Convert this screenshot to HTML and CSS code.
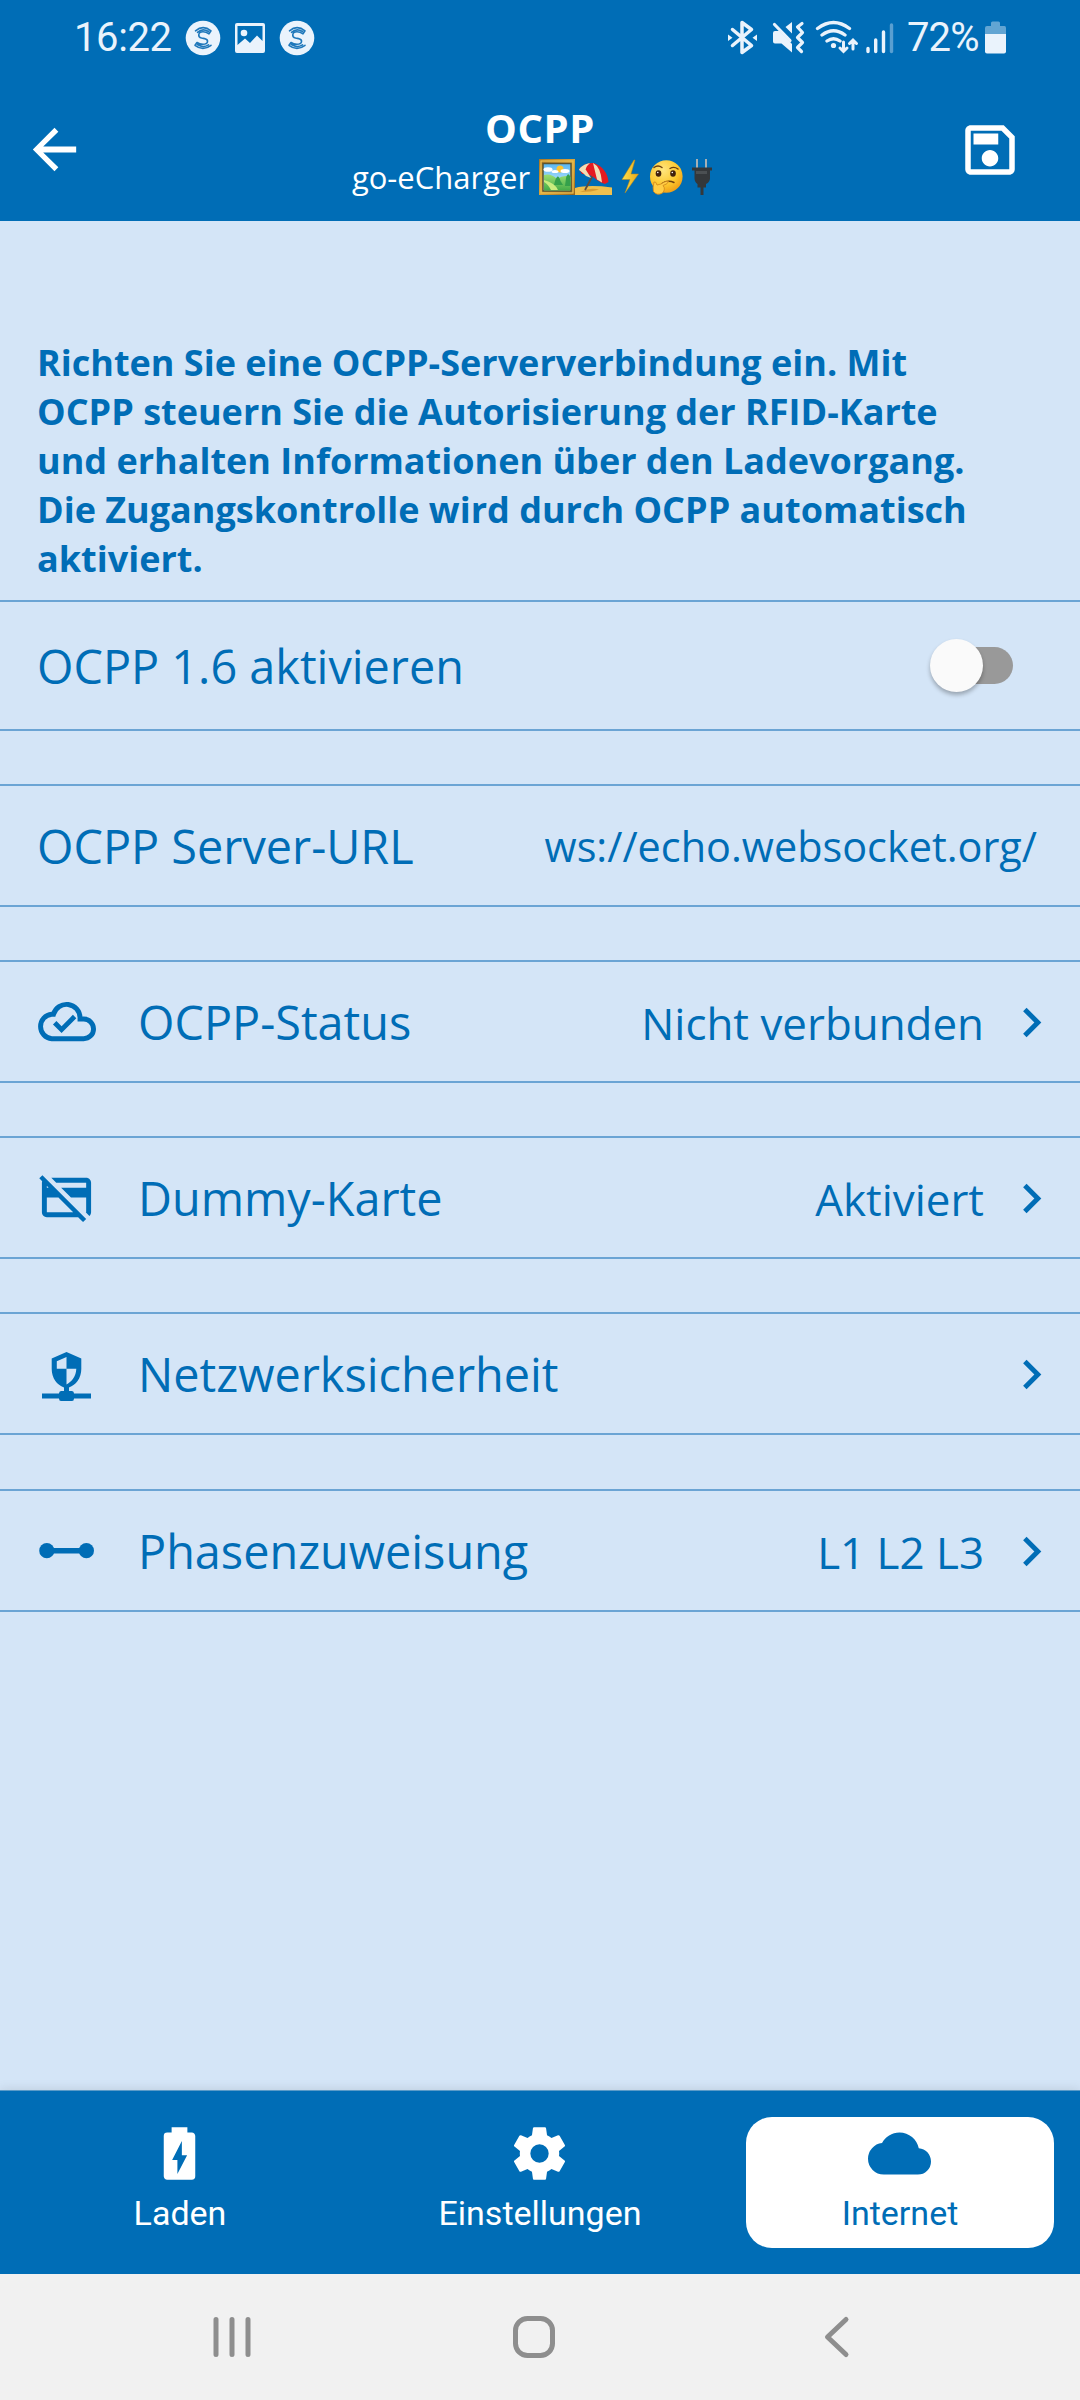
FILE: index.html
```html
<!DOCTYPE html>
<html lang="de">
<head>
<meta charset="utf-8">
<title>OCPP</title>
<link rel="stylesheet" href="styles.css">
</head>
<body>
<div class="screen">
  <header class="top">
    <div class="status">
      <div class="status-left">
        <span class="clock">16:22</span>
        <svg class="s-badge" width="36" height="36" viewBox="0 0 36 36"><circle cx="18" cy="18" r="17.3" fill="#eaf3fc"/><path fill="none" stroke="#1f78bb" stroke-width="1.600" stroke-linecap="round" stroke-linejoin="round" d="M10.500 10.800Q18 4.500 26 10.800L24 13.800Q21 11.800 18 11.800C12.800 11.800 12.500 17 16.500 18L19.500 18.600C24 19.800 23.500 24.300 18 24.300Q14.500 24.300 12 22.500L10 25.300Q18 31.500 26 25.300M12.500 12.300Q17.500 8 23.500 11.500M12.500 24.500Q18 28.300 23.500 24.800"/></svg>
        <svg class="s-image" width="32" height="32" viewBox="0 0 32 32"><path fill="#eaf3fc" fill-rule="evenodd" d="M3 1H29A2 2 0 0 1 31 3V29A2 2 0 0 1 29 31H3A2 2 0 0 1 1 29V3A2 2 0 0 1 3 1ZM3.500 4V23L11 16.500L16 21L23 13.500L28.500 19V4Z"/><circle cx="10" cy="11" r="3.300" fill="#eaf3fc"/></svg>
        <svg class="s-badge" width="36" height="36" viewBox="0 0 36 36"><circle cx="18" cy="18" r="17.3" fill="#eaf3fc"/><path fill="none" stroke="#1f78bb" stroke-width="1.600" stroke-linecap="round" stroke-linejoin="round" d="M10.500 10.800Q18 4.500 26 10.800L24 13.800Q21 11.800 18 11.800C12.800 11.800 12.500 17 16.500 18L19.500 18.600C24 19.800 23.500 24.300 18 24.300Q14.500 24.300 12 22.500L10 25.300Q18 31.500 26 25.300M12.500 12.300Q17.500 8 23.500 11.500M12.500 24.500Q18 28.300 23.500 24.800"/></svg>
      </div>
      <div class="status-right">
        <svg width="172" height="36" viewBox="728 19 172 36">
          <g fill="none" stroke="#eaf3fc" stroke-width="3.500" stroke-linecap="round" stroke-linejoin="round">
            <path d="M732.500 28.500L751.500 44.500L742 51.500V21.500L751.500 28.500L732.500 44.500"/>
          </g>
          <path fill="#eaf3fc" d="M728 33.500L732.500 36.700L728 40ZM757 33.500L752.500 36.700L757 40Z"/>
          <path fill="#eaf3fc" d="M775 30H779.500L792 43V51.500L781.500 42.500H775Q773 42.500 773 40.500V32Q773 30 775 30ZM792 21V32.500L785.500 26Z"/>
          <path fill="none" stroke="#eaf3fc" stroke-width="3.200" stroke-linecap="round" stroke-linejoin="round" d="M774.500 23.500L790 39.500M802 22.500L797.500 26L802.500 31.500L797.500 36.500L802.500 41.500L797.500 46.500L801.500 50.500"/>
          <g fill="none" stroke="#eaf3fc" stroke-width="3.300" stroke-linecap="round"><path d="M817.500 27.500Q833.500 15.500 849.500 27.500M822 34Q833.500 25.500 845 34M827 40Q833.500 35.500 840 40"/><path stroke-width="3" d="M843.500 41V50M840 47L843.500 50.500L847 47M853 48V39.500M849.500 42.500L853 39L856.500 42.500"/></g>
          <circle cx="833.500" cy="44.500" r="2.600" fill="#eaf3fc"/>
          <g stroke="#eaf3fc" stroke-width="3.400" stroke-linecap="round"><path d="M868 47.500V50.500M875.700 39V50.500M883.500 31V50.500"/><path stroke-opacity=".38" d="M891.500 24V50.500"/></g>
        </svg>
        <span class="percent">72%</span>
        <svg width="24" height="36" viewBox="984 19 24 36">
          <path fill="#eaf3fc" fill-opacity=".42" d="M991 25V22Q991 20.500 992.500 20.500H998.500Q1000 20.500 1000 22V25H1004.500Q1006 25 1006 27V33H985V27Q985 25 987 25Z"/>
          <path fill="#eaf3fc" d="M985 33H1006V50.500Q1006 52.500 1004 52.500H987Q985 52.500 985 50.500Z"/>
        </svg>
      </div>
    </div>
    <div class="appbar">
      <svg class="back" width="65" height="65" viewBox="0 0 24 24"><path fill="#fff" d="M20 10.900H7.830l5.590-5.490L12 4l-8 8 8 8 1.410-1.410L7.830 13.100H20z"/></svg>
      <div class="titles">
        <h1>OCPP</h1>
        <div class="subtitle"><span class="device">go-eCharger</span>
          <svg class="emoji" width="190" height="38" viewBox="538 160 190 38" role="img" aria-label="Bild, Sonnenschirm, Blitz, Nachdenken, Stecker">
            <defs>
              <linearGradient id="frame" x2="1" y2="1"><stop offset="0" stop-color="#a87624"/><stop offset=".5" stop-color="#d9a53c"/><stop offset="1" stop-color="#94651b"/></linearGradient>
              <linearGradient id="sky" x2="0" y2="1"><stop offset="0" stop-color="#57b6f2"/><stop offset="1" stop-color="#d9f2ff"/></linearGradient>
              <linearGradient id="grass" x2="0" y2="1"><stop offset="0" stop-color="#9ade72"/><stop offset="1" stop-color="#44ab48"/></linearGradient>
              <linearGradient id="bolt"><stop offset="0" stop-color="#ffe14a"/><stop offset="1" stop-color="#e8a91c"/></linearGradient>
              <radialGradient id="face" cx=".4" cy=".3" r=".75"><stop offset="0" stop-color="#ffe680"/><stop offset=".6" stop-color="#fdc92f"/><stop offset="1" stop-color="#ee9a14"/></radialGradient>
            </defs>
            <rect x="539" y="161" width="36" height="36" fill="url(#frame)"/><rect x="541" y="163" width="32" height="32" fill="none" stroke="#edc052" stroke-width="1.200"/>
            <rect x="543" y="165.500" width="28" height="27.500" fill="url(#sky)" stroke="#5b5430" stroke-width="1.500"/>
            <circle cx="560" cy="171" r="3.500" fill="#ffc52e"/><g fill="#fff"><ellipse cx="548" cy="171.500" rx="4.500" ry="2.300"/><ellipse cx="565" cy="173" rx="4.500" ry="2"/><ellipse cx="555" cy="173.500" rx="3.500" ry="1.600"/></g>
            <path fill="url(#grass)" d="M544 177Q551 175 557 181Q564 176 570.500 179V192.500H544Z"/><path fill="#34a04b" d="M555 183Q558 174 560.500 183L563 187H554ZM566 180Q568 173 570.500 179V188H565Z"/><path fill="#c9ec7f" d="M544 182Q555 185 558 192H551Q548 186 544 184Z"/>
            <path fill="#efc04e" d="M575 190Q588 186.500 612 189.500V197H575Z"/><path fill="#d79b31" d="M580 194Q590 189 599 191.500Q592 194 580 194Z"/>
            <path d="M593 177L585 192" stroke="#614c3e" stroke-width="1.800"/>
            <path fill="#e51b20" d="M579 171Q585 164 594 165Q607 170 608.500 184L605 186L601 184.500L597 182L592 178L586 176L582 176Z"/><path fill="#f1dfb6" d="M580 170Q584 166 590 165Q584 170 585.500 176.500L579 172ZM593 165Q601 169 602 184.500L597 181.500Z"/><path fill="#f1dfb6" d="M579 171L586 178L591 180L586 172Z"/>
            <path fill="url(#bolt)" stroke="#b88618" stroke-width=".5" d="M634 162L622 181.500H630L625 195L638.500 176H631L635 162Z"/>
            <circle cx="666.300" cy="178.500" r="16.300" fill="url(#face)"/><g fill="#42210c"><ellipse cx="658.500" cy="175.500" rx="2.800" ry="3.200"/><ellipse cx="673" cy="175.500" rx="2.800" ry="3.200"/></g><circle cx="657.800" cy="174.500" r=".8" fill="#fff"/><circle cx="672.300" cy="174.500" r=".8" fill="#fff"/>
            <path fill="none" stroke="#6b3e10" stroke-width="1.400" stroke-linecap="round" d="M654 169.500Q658 166.500 662 169.500M670 170.500Q674 168 678 171M662 185.500Q668 181.500 674 184.500"/>
            <path fill="#ffcd45" stroke="#d38b1e" stroke-width=".9" d="M654 184Q656 183 657 187L661 186Q666 182.500 668.500 183.500Q668 186 663 187.500Q666 191 662.500 195Q657 198 653.500 193.500Q652.500 190 654 184Z"/>
            <path fill="#a6b0b5" d="M696 161H698V170H696ZM705 161H707V170H705Z"/><path fill="#34383b" d="M692 169.500H712V172.500H710V181Q709 185 706 186V189.500H703.500V197H700.500V189.500H697.500V186Q694.500 184 694.500 180V172.500H692Z"/><path fill="#4b5053" d="M696 173H707V176H696Z"/>
          </svg>
        </div>
      </div>
      <svg class="save" width="66" height="66" viewBox="0 0 24 24"><path fill="#fff" d="M17 3H5C3.890 3 3 3.900 3 5V19C3 20.100 3.890 21 5 21H19C20.100 21 21 20.100 21 19V7L17 3M19 19H5V5H16.170L19 7.830V19M12 12C10.340 12 9 13.340 9 15S10.340 18 12 18 15 16.660 15 15 13.660 12 12 12M6 6H15V10H6V6Z"/></svg>
    </div>
  </header>

  <main class="content">
    <p class="intro">Richten Sie eine OCPP-Serververbindung ein. Mit OCPP steuern Sie die Autorisierung der RFID-Karte und erhalten Informationen über den Ladevorgang. Die Zugangskontrolle wird durch OCPP automatisch aktiviert.</p>

    <div class="row row-tall">
      <span class="label">OCPP 1.6 aktivieren</span>
      <span class="toggle"><span class="thumb"></span></span>
    </div>
    <div class="row">
      <span class="label">OCPP Server-URL</span>
      <span class="value url">ws://echo.websocket.org/</span>
    </div>
    <div class="row">
      <svg class="icon" viewBox="0 0 24 24"><path fill="none" stroke="#006db6" stroke-width="2" d="M6 19A5 5 0 0 1 6 9.040H6.710A5.500 5.500 0 0 1 17.500 10.500V11H19A4 4 0 0 1 19 19Z"/><path fill="#006db6" d="M10 16.700L6.500 13.200L7.900 11.800L10 13.900L14.600 9.300L16 10.700Z"/></svg>
      <span class="label">OCPP-Status</span>
      <span class="value">Nicht verbunden</span>
      <svg class="chevron" viewBox="0 0 24 24"><path d="M8.590 16.580L13.170 12L8.590 7.410L10 6L16 12L10 18Z"/></svg>
    </div>
    <div class="row">
      <svg class="icon" viewBox="0 0 24 24"><path fill="#006db6" d="M.93 4.200L2.210 2.930L20 20.720L18.730 22L16.730 20H4C2.890 20 2 19.100 2 18V6C2 5.780 2.040 5.570 2.110 5.380L.93 4.200M20 8V6H7.820L5.820 4H20C21.110 4 22 4.900 22 6V18C22 18.600 21.740 19.130 21.320 19.500L19.820 18H20V12H13.820L9.820 8H20M4 8H4.730L4 7.270V8M4 12V18H14.730L8.730 12H4Z"/></svg>
      <span class="label">Dummy-Karte</span>
      <span class="value">Aktiviert</span>
      <svg class="chevron" viewBox="0 0 24 24"><path d="M8.590 16.580L13.170 12L8.590 7.410L10 6L16 12L10 18Z"/></svg>
    </div>
    <div class="row">
      <svg class="icon" viewBox="37 1344 59 59"><path fill="#006db6" fill-rule="evenodd" d="M66.500 1352L81.300 1358.500V1369C81.300 1378 76 1385 69 1387.500V1391H72Q74 1391.300 74 1393.500H91V1398.500H74Q74 1401 72 1401H61Q59 1401 59 1398.500H42V1393.500H59Q59 1391.300 61 1391H64V1387.500C57 1385 51.700 1378 51.700 1369V1358.500ZM66.500 1357L56.800 1361.200V1368.700H66.500ZM66.500 1368.700V1384.500C72 1381.500 76 1376 76.300 1368.700Z"/></svg>
      <span class="label">Netzwerksicherheit</span>
      <svg class="chevron solo" viewBox="0 0 24 24"><path d="M8.590 16.580L13.170 12L8.590 7.410L10 6L16 12L10 18Z"/></svg>
    </div>
    <div class="row row-last">
      <svg class="icon" viewBox="37 1521 59 59"><path fill="#006db6" d="M46.800 1548H86.400V1553.400H46.800Z"/><circle cx="46.800" cy="1550.700" r="7.600" fill="#006db6"/><circle cx="86.400" cy="1550.700" r="7.600" fill="#006db6"/></svg>
      <span class="label">Phasenzuweisung</span>
      <span class="value">L1 L2 L3</span>
      <svg class="chevron" viewBox="0 0 24 24"><path d="M8.590 16.580L13.170 12L8.590 7.410L10 6L16 12L10 18Z"/></svg>
    </div>
  </main>

  <nav class="tabs">
    <div class="tab">
      <svg viewBox="0 0 24 24"><path d="M16.670 4H15V2H9V4H7.330A1.330 1.330 0 0 0 6 5.330V20.660C6 21.400 6.600 22 7.330 22H16.670A1.330 1.330 0 0 0 18 20.670V5.330C18 4.600 17.400 4 16.670 4M11.200 19.800V14.500H9.200L12.900 7.200V12.700H14.900Z"/></svg>
      <span>Laden</span>
    </div>
    <div class="tab">
      <svg viewBox="0 0 24 24"><path d="M12 15.500A3.500 3.500 0 0 1 8.500 12A3.500 3.500 0 0 1 12 8.500A3.500 3.500 0 0 1 15.500 12A3.500 3.500 0 0 1 12 15.500M19.430 12.970C19.470 12.650 19.500 12.330 19.500 12C19.500 11.670 19.470 11.340 19.430 11L21.540 9.370C21.730 9.220 21.780 8.950 21.660 8.730L19.660 5.270C19.540 5.050 19.270 4.960 19.050 5.050L16.560 6.050C16.040 5.660 15.500 5.320 14.870 5.070L14.500 2.420C14.460 2.180 14.250 2 14 2H10C9.750 2 9.540 2.180 9.500 2.420L9.130 5.070C8.500 5.320 7.960 5.660 7.440 6.050L4.950 5.050C4.730 4.960 4.460 5.050 4.340 5.270L2.340 8.730C2.210 8.950 2.270 9.220 2.460 9.370L4.570 11C4.530 11.340 4.500 11.670 4.500 12C4.500 12.330 4.530 12.650 4.570 12.970L2.460 14.630C2.270 14.780 2.210 15.050 2.340 15.270L4.340 18.730C4.460 18.950 4.730 19.030 4.950 18.950L7.440 17.940C7.960 18.340 8.500 18.680 9.130 18.930L9.500 21.580C9.540 21.820 9.750 22 10 22H14C14.250 22 14.460 21.820 14.500 21.580L14.870 18.930C15.500 18.670 16.040 18.340 16.560 17.940L19.050 18.950C19.270 19.030 19.540 18.950 19.660 18.730L21.660 15.270C21.780 15.050 21.730 14.780 21.540 14.630L19.430 12.970Z"/></svg>
      <span>Einstellungen</span>
    </div>
    <div class="tab active">
      <svg viewBox="0 0 24 24"><path d="M19.350 10.030C18.670 6.590 15.640 4 12 4 9.110 4 6.600 5.640 5.350 8.030A5.994 5.994 0 0 0 0 14a6 6 0 0 0 6 6h13a5 5 0 0 0 5-5c0-2.640-2.050-4.780-4.650-4.970z"/></svg>
      <span>Internet</span>
    </div>
  </nav>

  <div class="sysnav">
    <svg width="40" height="44" viewBox="0 0 40 44"><path d="M4 4.500V39.500M20 4.500V39.500M36 4.500V39.500"/></svg>
    <svg class="home" width="44" height="44" viewBox="0 0 44 44"><rect x="3.500" y="3.500" width="37" height="37" rx="12"/></svg>
    <svg width="28" height="44" viewBox="0 0 28 44"><path d="M24 4.500L5.500 22L24 39.500"/></svg>
  </div>
</div>
</body>
</html>
```
FILE: styles.css
```css
* { box-sizing: border-box; }

body {
  margin: 0;
  background: #d4e5f7;
  color: #006db6;
  font-family: "Open Sans", "Noto Sans", sans-serif;
}

svg { display: block; flex: none; }

.screen {
  width: 1080px;
  height: 2400px;
  display: flex;
  flex-direction: column;
  overflow: hidden;
}

/* header */
.top { height: 221px; background: #006db6; color: #fff; }

.status {
  height: 74px;
  padding: 1px 72px 0 74px;
  display: flex;
  justify-content: space-between;
  align-items: center;
  color: #eaf3fc;
}
.status-left, .status-right { display: flex; align-items: center; }
.clock { font: 40px/46px Roboto, sans-serif; width: 110.500px; letter-spacing: -.4px; padding-top: 1px; }
.s-image { margin: 0 13px; }
.percent {
  width: 84px;
  padding: 1px 0 0 7px;
  font: 40px/46px Roboto, sans-serif;
  letter-spacing: -.9px;
  white-space: nowrap;
}

.appbar {
  height: 147px;
  padding: 0 57px 0 22px;
  display: flex;
  justify-content: space-between;
}
.back, .save { margin-top: 43px; }
.titles { display: flex; flex-direction: column; align-items: center; margin-left: 36px; }
h1 { margin: 27px 0 0; font-size: 40px; line-height: 54px; font-weight: 700; letter-spacing: .6px; }
.subtitle { display: flex; align-items: center; height: 44px; gap: 8px; }
.device { font-size: 31px; line-height: 44px; white-space: nowrap; }

/* settings list */
.content { flex: 1; padding-top: 117px; }
.intro {
  margin: 0;
  padding: 0 90px 0 37px;
  height: 262px;
  font-size: 36px;
  line-height: 49px;
  font-weight: 700;
}
.row {
  height: 123px;
  margin-bottom: 53px;
  padding: 0 10px 0 37px;
  border-top: 2px solid #6ba4d4;
  border-bottom: 2px solid #6ba4d4;
  display: flex;
  align-items: center;
}
.row-tall { height: 131px; }
.row-last { margin-top: 54px; }
.label { font-size: 46.800px; line-height: 64px; white-space: nowrap; }
.icon { width: 59px; height: 59px; margin-right: 42px; }
.value { margin-left: auto; font-size: 43.900px; line-height: 60px; white-space: nowrap; padding-top: 3px; }
.url { font-size: 41.400px; margin-right: 33px; padding-top: 0; }
.chevron { width: 59px; height: 59px; margin: 2px 9px 0 18px; fill: #006db6; }
.solo { margin-left: auto; }

.toggle {
  margin-left: auto;
  margin-right: 57px;
  width: 83px;
  height: 37px;
  display: flex;
  align-items: center;
  background: linear-gradient(90deg, transparent 30px, #999 30px);
  border-radius: 19px;
}
.thumb {
  width: 53px;
  height: 53px;
  border-radius: 50%;
  background: #fafafa;
  box-shadow: 0 3px 4px rgba(0, 0, 0, .28);
}

/* bottom tabs */
.tabs {
  height: 184px;
  display: grid;
  grid-template-columns: repeat(3, 1fr);
  background: #006db6;
  border-top: 1px solid #5a9bc8;
  box-shadow: 0 -1px 10px rgba(0, 0, 0, .1);
  color: #fff;
  fill: #fff;
}
.tab {
  margin: 26px;
  padding-top: 5px;
  border-radius: 26px;
  display: flex;
  flex-direction: column;
  align-items: center;
  font: 34px/40px Roboto, sans-serif;
}
.tab svg { width: 63px; height: 63px; margin: 0 1px 8px 0; }
.active { background: #fff; color: #006db6; fill: #006db6; }

/* system navigation */
.sysnav {
  height: 126px;
  padding: 0 230px 0 212px;
  background: #f1f1f1;
  display: flex;
  justify-content: space-between;
  align-items: center;
  fill: none;
  stroke: #8e8e8e;
  stroke-width: 5px;
  stroke-linecap: round;
  stroke-linejoin: round;
}
.home { margin-right: 6px; }
```
